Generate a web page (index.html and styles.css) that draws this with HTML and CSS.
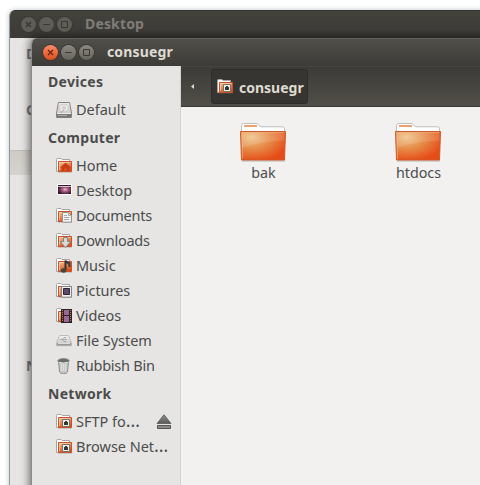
FILE: index.html
```
<!DOCTYPE html>
<html lang="en">
<head>
<meta charset="utf-8">
<title>consuegr</title>
<link rel="stylesheet" href="styles.css">
</head>
<body>
<svg class="defs" width="0" height="0" aria-hidden="true">
  <defs>
    <linearGradient id="orange" x1="0" y1="0" x2=".5" y2="1"><stop offset="0" stop-color="#f3cb96"/><stop offset=".5" stop-color="#e48c54"/><stop offset="1" stop-color="#db4b18"/></linearGradient>
    <radialGradient id="big" cx=".25" cy=".2" r="1"><stop offset="0" stop-color="#efc48a"/><stop offset=".4" stop-color="#e68d49"/><stop offset=".85" stop-color="#e64c18"/></radialGradient>
    <linearGradient id="metal" x1="0" y1="0" x2="0" y2="1"><stop offset="0" stop-color="#f4f4f4"/><stop offset="1" stop-color="#bdbdbd"/></linearGradient>
    <radialGradient id="wall" cx=".55" cy=".5" r=".6"><stop offset="0" stop-color="#eab9ca"/><stop offset=".4" stop-color="#a4577c"/><stop offset="1" stop-color="#2b0d24"/></radialGradient>
    <linearGradient id="grey" x1="0" y1="0" x2="0" y2="1"><stop offset="0" stop-color="#929292"/><stop offset="1" stop-color="#595959"/></linearGradient>
    <symbol id="base" viewBox="0 0 16 16">
      <path d="M.5 13.500V1.500Q.5.5 1.500.5H5l1 1h7.500v3" fill="#fff" stroke="#a5a5a3"/>
      <path d="M.5 13.500h2" stroke="#a5a5a3"/>
      <path d="M2.500 3.500h13v10h-13z" fill="url(#orange)" stroke="#cb512b"/>
      <path d="M3.500 12V4.500h11" fill="none" stroke="#f7d6b5" opacity=".65"/>
      <path d="M2 14.500h14" stroke="#777" opacity=".25"/>
    </symbol>
    <symbol id="home" viewBox="0 0 16 16"><use href="#base"/><path d="M4 9.500 9.500 4.800 15 9.500h-1.500V13h-3v-2.500h-2V13h-3V9.500z" fill="#c63d16"/></symbol>
    <symbol id="desktop" viewBox="0 0 16 16"><path d="M1 1h15v11H1z" fill="#fff"/><path d="M2 2h13v9H2z" fill="url(#wall)"/><path d="M2 2.500h13" stroke="#371c30"/><path d="M2 3.500h13" stroke="#fff" opacity=".7"/></symbol>
    <symbol id="documents" viewBox="0 0 16 16"><use href="#base"/><path d="M6.500 4.500h6l3 3v6.700h-9z" fill="#f2f2f1" stroke="#929292"/><path d="M12.500 4.500v3h3M8 7.500h3M8 9.500h5.500M8 11.500h5" fill="none" stroke="#aaa"/></symbol>
    <symbol id="downloads" viewBox="0 0 16 16"><use href="#base"/><path d="M7.500 4.500h4v4h3.300L9.500 14.500 4.200 8.500h3.300z" fill="#d8d8d8" stroke="#858585"/></symbol>
    <symbol id="music" viewBox="0 0 16 16"><use href="#base"/><path d="M9.500 12V2.500Q10.500 5 13.500 5v4" fill="none" stroke="#2d3130" stroke-width="2"/><ellipse cx="7.600" cy="12.500" rx="2.700" ry="2.200" fill="#3e4543"/><path d="m11 5 3 4V4z" fill="#3e4543"/></symbol>
    <symbol id="pictures" viewBox="0 0 16 16"><use href="#base"/><path d="M5.500 3.500h10v10.700h-10z" fill="#eee" stroke="#858585"/><path d="M7.500 5.500h6v6h-6z" fill="#5e4b6b" stroke="#2c2733"/></symbol>
    <symbol id="videos" viewBox="0 0 16 16"><use href="#base"/><path d="M5 1h11v14H5z" fill="#2b2426"/><path d="M8 2h5v5H8zM8 8h5v6H8z" fill="#9a6694"/><path d="M6.500 2v12M14.500 2v12" stroke="#db7854" stroke-dasharray="1 1"/></symbol>
    <symbol id="remote" viewBox="0 0 16 16"><use href="#base"/><path d="M6.500 5.500h7v7h-7z" fill="#eee" stroke="#777568"/><path d="M8 8h1V7h2v1h1v3H8z" fill="#333935"/></symbol>
    <symbol id="disk" viewBox="0 0 16 16"><path d="M2.500.5h11L15.500 11v4.500H.5V11z" fill="url(#metal)" stroke="#858585"/><ellipse cx="8" cy="6" rx="5" ry="4" fill="#e6e6e6" stroke="#c4c4c4"/><circle cx="8" cy="6" r="1.200" fill="#fff" stroke="#bbb"/><path d="M4 11.500 8 8" stroke="#aaa"/><path d="M1 11.500h14" stroke="#eee"/><path d="M1 12h14v3.500H1z" fill="#777"/><path d="M2 13.500h9" stroke="#aaa"/></symbol>
    <symbol id="filesystem" viewBox="0 0 16 16"><path d="M3.500 2.500h9l3 7v3.200H.5V9.500z" fill="url(#metal)" stroke="#bdbdbd"/><path d="M4 6.500h7M6 6.500l2-2h2M6 6.500l2 2h2" fill="none" stroke="#aaa"/><path d="M1 10h14v2.500H1z" fill="#999"/><path d="M2 10.500h12" stroke="#ddd"/></symbol>
    <symbol id="trash" viewBox="0 0 16 16"><path d="m2.500 3 1 11q.3 1.500 4 1.500t4-1.500l1-11" fill="#c8caca" stroke="#8b8e8c"/><path d="M5.500 5v8M7.500 5v8M9.500 5v8" stroke="#dedede"/><ellipse cx="7.500" cy="2.800" rx="5.700" ry="2.200" fill="#666a68" stroke="#8a8d8b"/><path d="M3 4.300q4.500 1.700 9 0" fill="none" stroke="#eee"/></symbol>
    <symbol id="folder" viewBox="0 0 48 40">
      <path d="M2.500 10V2.500Q2.500.5 4.500.5H18l3 2.800q1 .5 2 .5h20.500q2 0 2 2V10" fill="#fff" stroke="#bebebe"/>
      <path d="M5 2h13v2H5z" fill="#eea16d"/>
      <path d="M3 38h43" stroke="#777" stroke-width="2" opacity=".25"/>
      <path d="M1.500 8.500h45l-1 28.500h-43z" fill="url(#big)" stroke="#cb5a2b"/>
      <path d="M2.500 9.500h43l-.3 8Q18 19 2.700 25z" fill="#fff" opacity=".12"/>
      <path d="M2.500 9.500h43M3.500 10v26" stroke="#f3ba86" opacity=".55"/>
    </symbol>
    <symbol id="cross" viewBox="0 0 16 16"><path d="m5.300 5.300 5.400 5.400m0-5.400-5.400 5.400" fill="none" stroke="currentColor" stroke-width="1.300"/></symbol>
    <symbol id="minus" viewBox="0 0 16 16"><path d="M4.500 8h7" stroke="currentColor"/></symbol>
    <symbol id="square" viewBox="0 0 16 16"><path d="M4.800 4.800h6.400v6.400H4.800z" fill="none" stroke="currentColor"/></symbol>
  </defs>
</svg>
<div class="screen">
  <section class="window back">
    <header class="titlebar">
      <span class="button"><svg><use href="#cross"/></svg></span><span class="button"><svg><use href="#minus"/></svg></span><span class="button"><svg><use href="#square"/></svg></span>
      <span class="title">Desktop</span>
    </header>
    <div class="strip">
      <div class="heading">D</div><div class="row"></div>
      <div class="heading">C</div><div class="row"></div><div class="row selected"></div>
      <div class="gap"></div>
      <div class="heading">N</div>
    </div>
  </section>
  <section class="window front">
    <header class="titlebar">
      <span class="button close"><svg><use href="#cross"/></svg></span><span class="button"><svg><use href="#minus"/></svg></span><span class="button"><svg><use href="#square"/></svg></span>
      <span class="title">consuegr</span>
    </header>
    <div class="body">
      <nav class="sidebar">
        <div class="heading">Devices</div>
        <div class="row"><svg><use href="#disk"/></svg><span>Default</span></div>
        <div class="heading">Computer</div>
        <div class="row"><svg><use href="#home"/></svg><span>Home</span></div>
        <div class="row"><svg><use href="#desktop"/></svg><span>Desktop</span></div>
        <div class="row tight"><svg><use href="#documents"/></svg><span>Documents</span></div>
        <div class="row tight"><svg><use href="#downloads"/></svg><span>Downloads</span></div>
        <div class="row"><svg><use href="#music"/></svg><span>Music</span></div>
        <div class="row"><svg><use href="#pictures"/></svg><span>Pictures</span></div>
        <div class="row"><svg><use href="#videos"/></svg><span>Videos</span></div>
        <div class="row"><svg><use href="#filesystem"/></svg><span>File System</span></div>
        <div class="row tight"><svg><use href="#trash"/></svg><span>Rubbish Bin</span></div>
        <div class="heading">Network</div>
        <div class="row"><svg><use href="#remote"/></svg><span>SFTP fo<span class="dots">…</span></span><svg class="eject" viewBox="0 0 16 16"><path d="M8 .8 15 9.500H1z" fill="url(#grey)" stroke="#666"/><path d="M1.500 11.500h13v3h-13z" fill="#888" stroke="#555"/></svg></div>
        <div class="row"><svg><use href="#remote"/></svg><span>Browse Net<span class="dots">…</span></span></div>
      </nav>
      <main class="main">
        <div class="toolbar">
          <svg class="arrow" viewBox="0 0 4 5"><path d="M3 0v5L0 2.500z" fill="#dfdbd2"/></svg>
          <div class="crumb"><svg><use href="#remote"/></svg><span>consuegr</span></div>
        </div>
        <div class="files">
          <div class="file"><svg><use href="#folder"/></svg><span>bak</span></div>
          <div class="file"><svg><use href="#folder"/></svg><span>htdocs</span></div>
        </div>
      </main>
    </div>
  </section>
</div>
</body>
</html>
```
FILE: styles.css
```
* { box-sizing: border-box; }
body { margin: 0; background: #fff; color: #4c4c4c; font: 15px/25px "Noto Sans", sans-serif; }
.defs { position: absolute; }
.screen { position: relative; width: 480px; height: 485px; overflow: hidden; }
.window { position: absolute; width: 560px; height: 540px; border-radius: 6px 6px 0 0; overflow: hidden; }
.back { left: 9px; top: 10px; border-left: 1px solid #999; box-shadow: 0 0 5px #8899aa99; background: #e6e5e3; }
.back .heading { color: #77767a; }
.front { left: 31px; top: 38px; border-left: 1px solid #8b8b89; box-shadow: 0 0 10px 1px #0009; background: #f2f1f0; }
.titlebar { display: flex; align-items: center; gap: 3px; height: 28px; padding: 0 0 1px 11px; background: linear-gradient(#504f49, #3c3b37); border-top: 1px solid #65635c; color: #dfdbd2; }
.back .titlebar { background: linear-gradient(#42413c, #3c3b37); border-color: #35342f; color: #807d78; }
.button { width: 15px; height: 15px; border-radius: 50%; background: linear-gradient(#8a8881, #66645d); box-shadow: 0 0 0 1px #3a3934; color: #35342f; }
.button svg { display: block; width: 15px; height: 15px; }
.back .button { background: #5f5d56; }
.button.close { background: linear-gradient(#f58a65, #e24e1c); color: #64220b; }
.title { margin-left: 10px; font-weight: 700; font-size: 14px; line-height: 24px; letter-spacing: .15px; }
.heading { height: 31px; line-height: 31px; padding-left: 16px; font-weight: 700; font-size: 14px; letter-spacing: .3px; white-space: nowrap; }
.row { display: flex; align-items: center; height: 25px; padding-left: 24px; white-space: nowrap; font-size: 14.500px; letter-spacing: -.03px; }
.row.tight { letter-spacing: -.25px; }
.row > svg { width: 16px; height: 16px; margin-right: 4px; flex: none; }
.row > svg.eject { margin: 0 8px 0 auto; }
.dots { font-size: 18px; line-height: 1; }
.selected { background: linear-gradient(#cfccc7, #d5d3ce); border-top: 1px solid #c0bdb8; }
.gap { height: 175px; }
.body { display: flex; height: 512px; }
.sidebar { width: 149px; flex: none; background: #e6e5e3; border-right: 1px solid #d2d1ce; }
.main { flex: 1; }
.toolbar { display: flex; align-items: center; height: 41px; padding-left: 10px; background: linear-gradient(#3c3b37, #514f48); border-top: 1px solid #46453f; border-bottom: 1px solid #3c3b37; }
.arrow { width: 4px; height: 5px; margin-right: 16px; }
.crumb { display: flex; align-items: center; width: 97px; height: 35px; padding-left: 5px; padding-top: 1px; border: 1px solid #2f2e2b; border-radius: 3px; background: #363531; color: #dfdbd2; font-weight: 700; font-size: 14px; }
.crumb svg { width: 16px; height: 16px; margin-right: 6px; }
.files { display: flex; padding-top: 16px; padding-left: 4px; }
.file { display: flex; flex-direction: column; align-items: center; width: 155px; font-size: 14.300px; line-height: 20px; }
.file svg { width: 48px; height: 40px; }
.file span { padding-left: 2px; }
```
